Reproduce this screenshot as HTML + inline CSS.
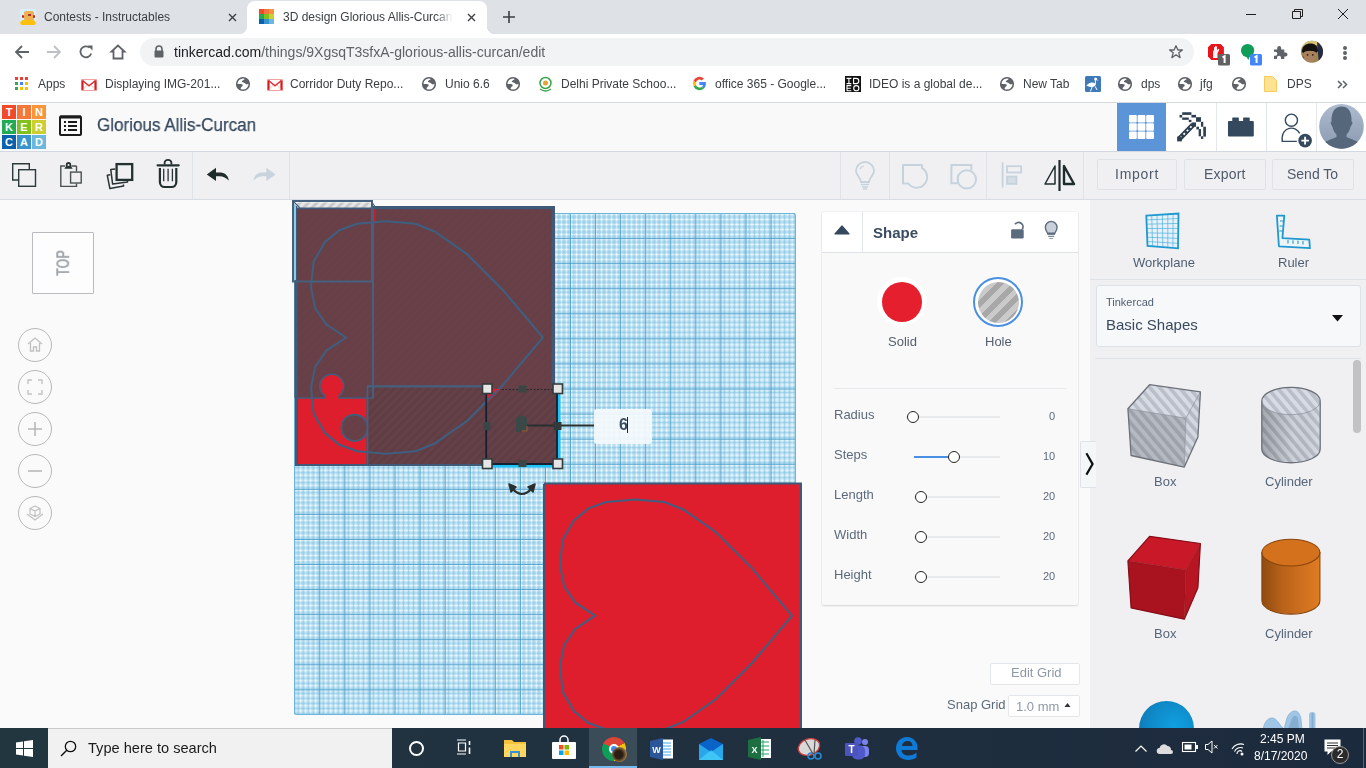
<!DOCTYPE html>
<html><head><meta charset="utf-8">
<style>
*{margin:0;padding:0;box-sizing:border-box}
html,body{width:1366px;height:768px;overflow:hidden;background:#fafafa;font-family:"Liberation Sans",sans-serif;position:relative}
.a{position:absolute}
.t{position:absolute;white-space:nowrap;line-height:1;will-change:transform}
svg{position:absolute;overflow:visible}
.bm{font-size:12px;color:#3c4043}
</style></head><body>
<!-- ===== CHROME TAB STRIP ===== -->
<div class="a" style="left:0;top:0;width:1366px;height:34px;background:#dee1e6"></div>
<!-- inactive tab -->
<div class="a" style="left:20px;top:9px;width:16px;height:16px;border-radius:2px;background:#d8f0fb;overflow:hidden">
  <div class="a" style="left:4px;top:2px;width:9.5px;height:9px;border-radius:2px 2px 1px 1px;background:#eeb050"></div>
  <div class="a" style="left:2px;top:6px;width:2px;height:3px;border-radius:1px;background:#b82a2a"></div>
  <div class="a" style="left:13px;top:6px;width:2px;height:3px;border-radius:1px;background:#b82a2a"></div>
  <div class="a" style="left:8px;top:5px;width:2.5px;height:2px;background:#a33"></div>
  <div class="a" style="left:0;top:11px;width:16px;height:5px;border-radius:4px 4px 1px 1px;background:#fcc10e"></div>
</div>
<div class="t" style="left:44px;top:10.5px;font-size:12px;color:#3c4043">Contests - Instructables</div>
<svg style="left:228px;top:13px" width="9" height="9" viewBox="0 0 9 9"><path d="M1 1L8 8M8 1L1 8" stroke="#3c4043" stroke-width="1.4"/></svg>
<!-- active tab -->
<div class="a" style="left:247px;top:1px;width:240px;height:34px;background:#fff;border-radius:8px 8px 0 0"></div>
<div class="a" style="left:239px;top:26px;width:8px;height:8px;background:radial-gradient(circle at 0 0,#dee1e6 8px,#fff 8.5px)"></div>
<div class="a" style="left:487px;top:26px;width:8px;height:8px;background:radial-gradient(circle at 100% 0,#dee1e6 8px,#fff 8.5px)"></div>
<!-- tinkercad favicon -->
<div class="a" style="left:259px;top:9px;width:15px;height:15px">
 <div class="a" style="left:0;top:0;width:4.5px;height:4.5px;background:#f04a2b"></div>
 <div class="a" style="left:5px;top:0;width:4.5px;height:4.5px;background:#f7763c"></div>
 <div class="a" style="left:10px;top:0;width:4.5px;height:4.5px;background:#f8953a"></div>
 <div class="a" style="left:0;top:5px;width:4.5px;height:4.5px;background:#22ab55"></div>
 <div class="a" style="left:5px;top:5px;width:4.5px;height:4.5px;background:#82c01e"></div>
 <div class="a" style="left:10px;top:5px;width:4.5px;height:4.5px;background:#cdcf30"></div>
 <div class="a" style="left:0;top:10px;width:4.5px;height:4.5px;background:#0a62ae"></div>
 <div class="a" style="left:5px;top:10px;width:4.5px;height:4.5px;background:#3a93cf"></div>
 <div class="a" style="left:10px;top:10px;width:4.5px;height:4.5px;background:#6bb8de"></div>
</div>
<div class="a" style="left:283px;top:8px;width:172px;height:18px;overflow:hidden">
 <div class="t" style="left:0;top:2.5px;font-size:12px;color:#3c4043">3D design Glorious Allis-Curcan | Tinkercad</div>
 <div class="a" style="left:152px;top:0;width:20px;height:18px;background:linear-gradient(90deg,rgba(255,255,255,0),#fff 90%)"></div>
</div>
<svg style="left:467px;top:13px" width="9" height="9" viewBox="0 0 9 9"><path d="M1 1L8 8M8 1L1 8" stroke="#3c4043" stroke-width="1.4"/></svg>
<svg style="left:503px;top:11px" width="12" height="12" viewBox="0 0 12 12"><path d="M6 0V12M0 6H12" stroke="#3c4043" stroke-width="1.6"/></svg>
<!-- window controls -->
<svg style="left:1246px;top:14px" width="10" height="1" viewBox="0 0 10 1"><path d="M0 .5H10" stroke="#1f1f1f" stroke-width="1"/></svg>
<svg style="left:1292px;top:9px" width="11" height="10" viewBox="0 0 11 10"><path d="M.5 2.5H8.5V9.5H.5Z M2.5 2.5V.5H10.5V7.5H8.5" fill="none" stroke="#1f1f1f" stroke-width="1"/></svg>
<svg style="left:1338px;top:9px" width="10" height="10" viewBox="0 0 10 10"><path d="M0 0L10 10M10 0L0 10" stroke="#1f1f1f" stroke-width="1"/></svg>

<!-- ===== ADDRESS ROW ===== -->
<div class="a" style="left:0;top:34px;width:1366px;height:68px;background:#fff"></div>
<svg style="left:15px;top:45px" width="14" height="14" viewBox="0 0 14 14"><path d="M14 7H1.5M7 1L1 7L7 13" fill="none" stroke="#5f6368" stroke-width="1.8"/></svg>
<svg style="left:47px;top:45px" width="14" height="14" viewBox="0 0 14 14"><path d="M0 7H12.5M7 1L13 7L7 13" fill="none" stroke="#bdc1c6" stroke-width="1.8"/></svg>
<svg style="left:79px;top:45px" width="14" height="14" viewBox="0 0 14 14"><path d="M12.2 8.5A5.5 5.5 0 1 1 10.5 2.6" fill="none" stroke="#5f6368" stroke-width="1.8"/><path d="M8.5 0.5H13.5V5.5Z" fill="#5f6368"/></svg>
<svg style="left:110px;top:44px" width="16" height="16" viewBox="0 0 16 16"><path d="M8 1.5L1.5 7.5H3.5V14.5H12.5V7.5H14.5Z" fill="none" stroke="#5f6368" stroke-width="1.8" stroke-linejoin="miter"/></svg>
<div class="a" style="left:140px;top:38px;width:1054px;height:28px;border-radius:14px;background:#f1f3f4"></div>
<svg style="left:154px;top:45px" width="10" height="13" viewBox="0 0 10 13"><path d="M2 6V4A3 3 0 0 1 8 4V6" fill="none" stroke="#5f6368" stroke-width="1.6"/><rect x="0.5" y="5.5" width="9" height="7" rx="1" fill="#5f6368"/></svg>
<div class="t" style="left:174px;top:44.5px;font-size:14px;color:#202124;letter-spacing:0">tinkercad.com<span style="color:#5f6368">/things/9XgsqT3sfxA-glorious-allis-curcan/edit</span></div>
<svg style="left:1169px;top:45px" width="14" height="14" viewBox="0 0 14 14"><path d="M7 .8L8.9 5H13.4L9.8 7.8L11.1 12.6L7 9.8L2.9 12.6L4.2 7.8L.6 5H5.1Z" fill="none" stroke="#5f6368" stroke-width="1.3" stroke-linejoin="round"/></svg>
<!-- extensions -->
<svg style="left:1200px;top:36px" width="130" height="32" viewBox="1200 36 130 32">
<path d="M1211.3 44H1220.6L1223.9 47.3V56.6L1220.6 59.9H1211.3L1208 56.6V47.3Z" fill="#e8141a"/>
<path d="M1213 58V51.5L1214 50V47.5C1214 46.8 1215 46.8 1215 47.5V46.3C1215 45.6 1216 45.6 1216 46.3V46.8C1216 46.1 1217 46.1 1217 46.8V50L1218.5 49C1219 48.7 1219.6 49.3 1219.2 49.8L1217.5 53.5V58Z" fill="#fff" opacity=".95"/>
<rect x="1218" y="54" width="12" height="11.5" rx="1.5" fill="#616161"/>
<path d="M1222.5 57.3L1224.6 56.1V63" fill="none" stroke="#fff" stroke-width="2"/>
<circle cx="1247.6" cy="50.5" r="6.6" fill="#0f9d58"/>
<path d="M1246 56L1248.3 60L1250 56Z" fill="#0f9d58"/>
<rect x="1250" y="54" width="12" height="11.5" rx="1.5" fill="#4285f4"/>
<path d="M1254.5 57.3L1256.6 56.1V63" fill="none" stroke="#fff" stroke-width="2"/>
<path d="M1274 49.5H1277.2V48A2 2 0 0 1 1281.2 48V49.5H1284.3V52.6H1285.5A2 2 0 0 1 1285.5 56.6H1284.3V59H1281V57.8A2 2 0 0 0 1277 57.8V59H1274V55.8H1275.3A2 2 0 0 0 1275.3 51.8H1274Z" fill="#5f6368"/>
<defs><clipPath id="avc2"><circle cx="1312" cy="51.8" r="11"/></clipPath></defs>
<g clip-path="url(#avc2)">
<rect x="1300" y="40" width="24" height="24" fill="#9a8450"/>
<path d="M1300 40H1324V48C1318 44 1308 44 1300 47Z" fill="#d6c27a"/>
<path d="M1317 42L1324 44V64H1319Z" fill="#262a44"/>
<path d="M1302 52C1302 46 1306 43.5 1310.5 43.5C1315 43.5 1318 46 1318 51L1316 53C1314 50 1306 50 1304 53Z" fill="#15110e"/>
<path d="M1304 52.5C1305 50.5 1314 50.5 1316 52.5C1317 57 1315 62 1310 62.5C1306 62.5 1303.5 58 1304 52.5Z" fill="#a8825e"/>
<circle cx="1307.5" cy="54.8" r=".9" fill="#2a1a10"/><circle cx="1312.8" cy="54.8" r=".9" fill="#2a1a10"/>
<path d="M1300 58L1304 56V64H1300Z" fill="#c02020" opacity=".6"/>
</g>
</svg>
<div class="a" style="left:1343px;top:46px;width:4px;height:4px;border-radius:50%;background:#5f6368"></div>
<div class="a" style="left:1343px;top:51px;width:4px;height:4px;border-radius:50%;background:#5f6368"></div>
<div class="a" style="left:1343px;top:56px;width:4px;height:4px;border-radius:50%;background:#5f6368"></div>

<!-- ===== BOOKMARKS ===== -->

<div class="a" style="left:15px;top:77px;width:3px;height:3px;background:#ea4335"></div><div class="a" style="left:20px;top:77px;width:3px;height:3px;background:#ea4335"></div><div class="a" style="left:25px;top:77px;width:3px;height:3px;background:#ea4335"></div><div class="a" style="left:15px;top:82px;width:3px;height:3px;background:#34a853"></div><div class="a" style="left:20px;top:82px;width:3px;height:3px;background:#4285f4"></div><div class="a" style="left:25px;top:82px;width:3px;height:3px;background:#fbbc04"></div><div class="a" style="left:15px;top:87px;width:3px;height:3px;background:#34a853"></div><div class="a" style="left:20px;top:87px;width:3px;height:3px;background:#fbbc04"></div><div class="a" style="left:25px;top:87px;width:3px;height:3px;background:#fbbc04"></div>
<div class="t bm" style="left:38px;top:78px">Apps</div>
<svg style="left:81px;top:78.5px" width="16" height="12" viewBox="0 0 16 12"><rect x=".6" y=".6" width="14.8" height="10.8" fill="#fff" stroke="#f08a8a" stroke-width=".8"/><path d="M1.6 11V1.4M14.4 11V1.4" stroke="#d41c1c" stroke-width="2"/><path d="M1.5 1.5L8 6.8L14.5 1.5" fill="none" stroke="#de3030" stroke-width="1.6"/><path d="M2 10.5L6.2 6M14 10.5L9.8 6" stroke="#f29a9a" stroke-width=".6"/></svg>
<div class="t bm" style="left:105px;top:78px">Displaying IMG-201...</div>
<svg style="left:235px;top:76px" width="16" height="16" viewBox="0 0 16 16"><circle cx="8" cy="8" r="6.3" fill="#fff" stroke="#5f6368" stroke-width="1.6"/><path d="M6.8 6C6.8 4.6 8.2 4 9.3 3.4L10.2 1.8A6.5 6.5 0 0 1 14.3 7.6L12.4 8.3C11.4 8.6 10.6 8.3 10.2 7.6C9.6 6.8 8.6 6.4 6.8 6Z" fill="#5f6368"/><path d="M1.6 8.1H5.9C7.4 8.1 8.1 9.1 7.6 10C6.6 10.5 6 11.2 5.6 12.5L5.4 14.2A6.5 6.5 0 0 1 1.6 8.1Z" fill="#5f6368"/></svg>
<svg style="left:267px;top:78.5px" width="16" height="12" viewBox="0 0 16 12"><rect x=".6" y=".6" width="14.8" height="10.8" fill="#fff" stroke="#f08a8a" stroke-width=".8"/><path d="M1.6 11V1.4M14.4 11V1.4" stroke="#d41c1c" stroke-width="2"/><path d="M1.5 1.5L8 6.8L14.5 1.5" fill="none" stroke="#de3030" stroke-width="1.6"/><path d="M2 10.5L6.2 6M14 10.5L9.8 6" stroke="#f29a9a" stroke-width=".6"/></svg>
<div class="t bm" style="left:290px;top:78px">Corridor Duty Repo...</div>
<svg style="left:421px;top:76px" width="16" height="16" viewBox="0 0 16 16"><circle cx="8" cy="8" r="6.3" fill="#fff" stroke="#5f6368" stroke-width="1.6"/><path d="M6.8 6C6.8 4.6 8.2 4 9.3 3.4L10.2 1.8A6.5 6.5 0 0 1 14.3 7.6L12.4 8.3C11.4 8.6 10.6 8.3 10.2 7.6C9.6 6.8 8.6 6.4 6.8 6Z" fill="#5f6368"/><path d="M1.6 8.1H5.9C7.4 8.1 8.1 9.1 7.6 10C6.6 10.5 6 11.2 5.6 12.5L5.4 14.2A6.5 6.5 0 0 1 1.6 8.1Z" fill="#5f6368"/></svg>
<div class="t bm" style="left:445px;top:78px">Unio 6.6</div>
<svg style="left:505px;top:76px" width="16" height="16" viewBox="0 0 16 16"><circle cx="8" cy="8" r="6.3" fill="#fff" stroke="#5f6368" stroke-width="1.6"/><path d="M6.8 6C6.8 4.6 8.2 4 9.3 3.4L10.2 1.8A6.5 6.5 0 0 1 14.3 7.6L12.4 8.3C11.4 8.6 10.6 8.3 10.2 7.6C9.6 6.8 8.6 6.4 6.8 6Z" fill="#5f6368"/><path d="M1.6 8.1H5.9C7.4 8.1 8.1 9.1 7.6 10C6.6 10.5 6 11.2 5.6 12.5L5.4 14.2A6.5 6.5 0 0 1 1.6 8.1Z" fill="#5f6368"/></svg>
<svg style="left:538px;top:76px" width="15" height="16" viewBox="0 0 15 16"><circle cx="7.5" cy="7" r="5.5" fill="none" stroke="#3aa34a" stroke-width="1.5"/><circle cx="7.5" cy="7" r="2.5" fill="#e8a030"/><path d="M2 13Q7.5 17 13 13" fill="none" stroke="#3aa34a" stroke-width="1.5"/></svg>
<div class="t bm" style="left:561px;top:78px">Delhi Private Schoo...</div>
<svg style="left:692px;top:76px" width="15" height="15" viewBox="0 0 16 16"><path d="M15 8.2H8V6.6H14.8" fill="#4285f4"/><path d="M14.5 6.6A7 7 0 0 1 12.8 13.2L10.6 11.4A4 4 0 0 0 11.9 9.5H8V6.6Z" fill="#4285f4"/><path d="M12.8 13.2A7 7 0 0 1 1.7 11.1L4.2 9.2A4 4 0 0 0 10.6 11.4Z" fill="#34a853"/><path d="M1.7 11.1A7 7 0 0 1 1.7 4.9L4.2 6.8A4 4 0 0 0 4.2 9.2Z" fill="#fbbc05"/><path d="M1.7 4.9A7 7 0 0 1 12.6 2.6L10.5 4.7A4 4 0 0 0 4.2 6.8Z" fill="#ea4335"/></svg>
<div class="t bm" style="left:715px;top:78px">office 365 - Google...</div>
<svg style="left:845px;top:76px" width="16" height="16" viewBox="0 0 16 16"><rect width="16" height="16" fill="#111"/><path d="M1.5 2.4H6.3M1.5 7.6H6.3M3.9 2.4V7.6M8.6 2.4H11.2A2.6 2.6 0 0 1 11.2 7.6H8.6Z M1.6 9.6H6.3M1.6 12.2H5.8M1.6 14.7H6.3M2 9.6V14.7" fill="none" stroke="#fff" stroke-width="1.1"/><circle cx="11.3" cy="12.2" r="2.6" fill="none" stroke="#fff" stroke-width="1.1"/></svg>
<div class="t bm" style="left:869px;top:78px">IDEO is a global de...</div>
<svg style="left:999px;top:76px" width="16" height="16" viewBox="0 0 16 16"><circle cx="8" cy="8" r="6.3" fill="#fff" stroke="#5f6368" stroke-width="1.6"/><path d="M6.8 6C6.8 4.6 8.2 4 9.3 3.4L10.2 1.8A6.5 6.5 0 0 1 14.3 7.6L12.4 8.3C11.4 8.6 10.6 8.3 10.2 7.6C9.6 6.8 8.6 6.4 6.8 6Z" fill="#5f6368"/><path d="M1.6 8.1H5.9C7.4 8.1 8.1 9.1 7.6 10C6.6 10.5 6 11.2 5.6 12.5L5.4 14.2A6.5 6.5 0 0 1 1.6 8.1Z" fill="#5f6368"/></svg>
<div class="t bm" style="left:1023px;top:78px">New Tab</div>
<svg style="left:1085px;top:76px" width="16" height="16" viewBox="0 0 16 16"><rect width="16" height="16" rx="1.5" fill="#3f79ba"/><path d="M1.2 9.4C2.5 9 3.5 7 6.5 6.6C8.5 6.4 10 7.2 10.6 8.3C10.5 10 9 11 6.8 11C4.5 11 3 10 1.2 9.4Z" fill="#fff"/><path d="M10.4 8.6V4.2M7.4 10.6L5.4 15.4M10.2 10.4L12 14" stroke="#fff" stroke-width="1"/><circle cx="10.6" cy="3.1" r="1.5" fill="#fff"/><path d="M11.5 3.3L12.8 4.6" stroke="#fff" stroke-width=".8"/></svg>
<svg style="left:1117px;top:76px" width="16" height="16" viewBox="0 0 16 16"><circle cx="8" cy="8" r="6.3" fill="#fff" stroke="#5f6368" stroke-width="1.6"/><path d="M6.8 6C6.8 4.6 8.2 4 9.3 3.4L10.2 1.8A6.5 6.5 0 0 1 14.3 7.6L12.4 8.3C11.4 8.6 10.6 8.3 10.2 7.6C9.6 6.8 8.6 6.4 6.8 6Z" fill="#5f6368"/><path d="M1.6 8.1H5.9C7.4 8.1 8.1 9.1 7.6 10C6.6 10.5 6 11.2 5.6 12.5L5.4 14.2A6.5 6.5 0 0 1 1.6 8.1Z" fill="#5f6368"/></svg>
<div class="t bm" style="left:1141px;top:78px">dps</div>
<svg style="left:1177px;top:76px" width="16" height="16" viewBox="0 0 16 16"><circle cx="8" cy="8" r="6.3" fill="#fff" stroke="#5f6368" stroke-width="1.6"/><path d="M6.8 6C6.8 4.6 8.2 4 9.3 3.4L10.2 1.8A6.5 6.5 0 0 1 14.3 7.6L12.4 8.3C11.4 8.6 10.6 8.3 10.2 7.6C9.6 6.8 8.6 6.4 6.8 6Z" fill="#5f6368"/><path d="M1.6 8.1H5.9C7.4 8.1 8.1 9.1 7.6 10C6.6 10.5 6 11.2 5.6 12.5L5.4 14.2A6.5 6.5 0 0 1 1.6 8.1Z" fill="#5f6368"/></svg>
<div class="t bm" style="left:1200px;top:78px">jfg</div>
<svg style="left:1231px;top:76px" width="16" height="16" viewBox="0 0 16 16"><circle cx="8" cy="8" r="6.3" fill="#fff" stroke="#5f6368" stroke-width="1.6"/><path d="M6.8 6C6.8 4.6 8.2 4 9.3 3.4L10.2 1.8A6.5 6.5 0 0 1 14.3 7.6L12.4 8.3C11.4 8.6 10.6 8.3 10.2 7.6C9.6 6.8 8.6 6.4 6.8 6Z" fill="#5f6368"/><path d="M1.6 8.1H5.9C7.4 8.1 8.1 9.1 7.6 10C6.6 10.5 6 11.2 5.6 12.5L5.4 14.2A6.5 6.5 0 0 1 1.6 8.1Z" fill="#5f6368"/></svg>
<svg style="left:1264px;top:76px" width="13" height="16" viewBox="0 0 13 16"><path d="M.5 .5H8.5L12.5 4.5V15.5H.5Z" fill="#fde293" stroke="#f9cb5a" stroke-width="1"/></svg>
<div class="t bm" style="left:1287px;top:78px">DPS</div>
<svg style="left:1337px;top:80px" width="11" height="9" viewBox="0 0 11 9"><path d="M1 1L4.5 4.5L1 8M6 1L9.5 4.5L6 8" fill="none" stroke="#5f6368" stroke-width="1.5"/></svg>

<!-- ===== TINKERCAD HEADER ===== -->

<div class="a" style="left:0;top:102px;width:1366px;height:50px;background:#f9f9f9;border-top:1px solid #d6d9e0;border-bottom:1px solid #d3d8e0"></div>
<!-- logo -->
<div class="a" style="left:2px;top:105px;width:44px;height:44px;font:bold 11px/14px 'Liberation Sans',sans-serif;color:#fff;text-align:center">
 <div class="a" style="left:0;top:0;width:14px;height:14px;background:#f04a2b">T</div>
 <div class="a" style="left:15px;top:0;width:14px;height:14px;background:#f7763c">I</div>
 <div class="a" style="left:30px;top:0;width:14px;height:14px;background:#f8953a">N</div>
 <div class="a" style="left:0;top:15px;width:14px;height:14px;background:#22ab55">K</div>
 <div class="a" style="left:15px;top:15px;width:14px;height:14px;background:#82c01e">E</div>
 <div class="a" style="left:30px;top:15px;width:14px;height:14px;background:#cdcf30">R</div>
 <div class="a" style="left:0;top:30px;width:14px;height:14px;background:#0a62ae">C</div>
 <div class="a" style="left:15px;top:30px;width:14px;height:14px;background:#3a93cf">A</div>
 <div class="a" style="left:30px;top:30px;width:14px;height:14px;background:#6bb8de">D</div>
</div>
<!-- list icon -->
<svg style="left:59px;top:115px" width="23" height="21" viewBox="0 0 23 21"><rect x="1" y="1.5" width="21" height="18.5" rx="1" fill="none" stroke="#1b1b1b" stroke-width="2"/><path d="M1 2H22" stroke="#1b1b1b" stroke-width="3"/><path d="M5 7H7M9 7H18M5 11H7M9 11H18M5 15H7M9 15H18" stroke="#1b1b1b" stroke-width="2.2"/></svg>
<div class="t" style="left:96.5px;top:116.2px;font-size:18px;color:#34465c;transform:scaleX(.947);transform-origin:0 0;-webkit-text-stroke:.25px #34465c">Glorious Allis-Curcan</div>
<!-- header right buttons -->
<div class="a" style="left:1117px;top:103px;width:49px;height:48px;background:#5b95d8"></div>
<svg style="left:1129px;top:115px" width="25" height="24" viewBox="0 0 25 24"><g fill="#fff"><rect x="0.0" y="0.0" width="7.8" height="7.5" rx="1"/><rect x="8.6" y="0.0" width="7.8" height="7.5" rx="1"/><rect x="17.2" y="0.0" width="7.8" height="7.5" rx="1"/><rect x="0.0" y="8.3" width="7.8" height="7.5" rx="1"/><rect x="8.6" y="8.3" width="7.8" height="7.5" rx="1"/><rect x="17.2" y="8.3" width="7.8" height="7.5" rx="1"/><rect x="0.0" y="16.6" width="7.8" height="7.5" rx="1"/><rect x="8.6" y="16.6" width="7.8" height="7.5" rx="1"/><rect x="17.2" y="16.6" width="7.8" height="7.5" rx="1"/></g></svg>
<div class="a" style="left:1166px;top:103px;width:150px;height:48px;background:#fff"></div>
<div class="a" style="left:1216px;top:103px;width:1px;height:48px;background:#e3e6ea"></div>
<div class="a" style="left:1266px;top:103px;width:1px;height:48px;background:#e3e6ea"></div>
<div class="a" style="left:1316px;top:103px;width:1px;height:48px;background:#e3e6ea"></div>
<div class="a" style="left:1317px;top:103px;width:49px;height:48px;background:#fff"></div>
<!-- pickaxe -->
<svg style="left:1170px;top:105px" width="90" height="45" viewBox="0 0 1366 683"><g fill="#2d3e50"><rect x="185" y="110" width="140" height="40"/><rect x="145" y="150" width="40" height="40"/><rect x="325" y="150" width="70" height="40"/><rect x="185" y="190" width="100" height="35"/><rect x="395" y="185" width="75" height="70"/><rect x="285" y="225" width="40" height="35"/><rect x="470" y="255" width="35" height="75"/><rect x="400" y="330" width="40" height="40"/><rect x="435" y="365" width="35" height="110"/><rect x="505" y="330" width="40" height="150"/><rect x="470" y="475" width="35" height="40"/><rect x="330" y="265" width="65" height="65"/></g>
<path d="M140 515L350 300" stroke="#2d3e50" stroke-width="78"/>
<path d="M155 500L345 305" stroke="#fff" stroke-width="26" stroke-dasharray="30 42"/>
<rect x="108" y="480" width="72" height="72" fill="#2d3e50"/>
</svg>
<!-- brick -->
<svg style="left:1170px;top:105px" width="90" height="45" viewBox="0 0 1366 683"><g fill="#34495e"><rect x="945" y="188" width="100" height="70" rx="8"/><rect x="1110" y="188" width="100" height="70" rx="8"/><rect x="880" y="243" width="392" height="235" rx="14"/></g></svg>
<!-- person add -->
<svg style="left:1270px;top:103px" width="96" height="48" viewBox="1270 103 96 48">
<circle cx="1291.4" cy="120.2" r="6.1" fill="none" stroke="#34495e" stroke-width="1.4"/>
<path d="M1299.7 133.4A9.2 9.2 0 0 0 1282.2 137.3V141.4H1296.8" fill="none" stroke="#34495e" stroke-width="1.4"/>
<circle cx="1305.1" cy="140.6" r="6.8" fill="#34495e"/>
<path d="M1305.1 136.8V144.4M1301.3 140.6H1308.9" stroke="#fff" stroke-width="1.9"/>
<defs><clipPath id="avc"><circle cx="1341.5" cy="126.4" r="22.3"/></clipPath><linearGradient id="avg" x1="0" y1="0" x2="0" y2="1"><stop offset="0" stop-color="#aebcd0"/><stop offset="1" stop-color="#8898ae"/></linearGradient></defs>
<g clip-path="url(#avc)">
<rect x="1318" y="103" width="48" height="48" fill="url(#avg)"/>
<path d="M1331.5 122C1331 112 1335 106.5 1341.5 106.5C1348 106.5 1352 111 1351.5 121.5L1352.6 122.5C1352 125 1351 126 1350.5 127C1349.5 131 1348 133 1346.5 134.5V137C1352 139.5 1358 141 1361 145L1362 152H1321L1322 145C1325 141 1331 139.5 1336.5 137V134.5C1335 133 1333.5 131 1332.5 127C1332 126 1331 125 1330.5 122.5Z" fill="#56667b"/>
</g>
</svg>

<!-- ===== TOOLBAR ===== -->
<div class="a" style="left:0;top:152px;width:1366px;height:48px;background:#f0f0f3;border-bottom:1px solid #d8dce3"></div>
<div class="a" style="left:192px;top:152px;width:1px;height:47px;background:#e0e3e8"></div>
<div class="a" style="left:289px;top:152px;width:1px;height:47px;background:#e0e3e8"></div>
<div class="a" style="left:840px;top:152px;width:1px;height:47px;background:#e0e3e8"></div>
<div class="a" style="left:889px;top:152px;width:1px;height:47px;background:#e0e3e8"></div>
<div class="a" style="left:986px;top:152px;width:1px;height:47px;background:#e0e3e8"></div>
<div class="a" style="left:1083px;top:152px;width:1px;height:47px;background:#e0e3e8"></div>
<!-- copy -->
<svg style="left:12px;top:163px" width="25" height="24" viewBox="0 0 25 24"><path d="M6.5 17H.7V.7H17.3V6.5" fill="none" stroke="#2b3a3a" stroke-width="1.4"/><rect x="6.7" y="6.7" width="16.8" height="16.6" fill="none" stroke="#2b3a3a" stroke-width="1.4"/></svg>
<!-- paste -->
<svg style="left:55px;top:155px" width="130" height="40" viewBox="55 155 130 40">
<path d="M65 166H60.8V186.4H76.5V183.5M76.5 166H71.5M76.5 166V171.5" fill="none" stroke="#4a5050" stroke-width="1.4"/>
<path d="M64.3 168.7H72.7L71.2 166.5V164.7A2.7 2.7 0 0 0 65.8 164.7V166.5Z" fill="#2b3434"/>
<circle cx="68.5" cy="165" r="1" fill="#f0f0f3"/>
<rect x="70.6" y="172.1" width="10.6" height="10.9" fill="none" stroke="#4a5050" stroke-width="1.4"/>
<!-- duplicate -->
<rect x="116.6" y="164.1" width="15.6" height="15.8" fill="none" stroke="#233030" stroke-width="2.3"/>
<path d="M115.3 169L110.8 169.6L112.6 184.1L127.6 182.1L127.4 181" fill="none" stroke="#2b3434" stroke-width="1.5" stroke-linejoin="round"/>
<path d="M110.3 174.7L107.3 175.3L109.9 188.6L123.6 186.1L123.3 184.5" fill="none" stroke="#2b3434" stroke-width="1.5" stroke-linejoin="round"/>
<!-- trash -->
<path d="M157.6 165.3H178.7" stroke="#233030" stroke-width="2.2" stroke-linecap="round"/>
<path d="M164.6 164.5V162.8A3.4 3 0 0 1 171.4 162.8V164.5" fill="none" stroke="#233030" stroke-width="1.8"/>
<path d="M159.9 168V182.3A4.7 4.7 0 0 0 164.6 187H171.6A4.7 4.7 0 0 0 176.3 182.3V168" fill="none" stroke="#233030" stroke-width="2.2"/>
<path d="M163.7 168.8V181.2M168.1 168.8V181.2M172.4 168.8V181.2" stroke="#2b3434" stroke-width="1.3"/>
</svg>
<!-- undo -->
<svg style="left:195px;top:155px" width="90" height="40" viewBox="195 155 90 40">
<path d="M206.8 174.4L216 167.7V172.6H219.5C224.5 172.6 228.3 175.2 228.8 180.8C226.3 177.8 223.2 176.2 219.5 176.2H216V180.9Z" fill="#1f2c2c"/>
<path d="M275.5 174.4L266.3 167.7V172.6H262.8C257.8 172.6 254 175.2 253.5 180.8C256 177.8 259.1 176.2 262.8 176.2H266.3V180.9Z" fill="#c8d3dd"/>
</svg>
<!-- bulb -->
<svg style="left:855px;top:162px" width="20" height="28" viewBox="0 0 20 28"><path d="M6 20C6 16 1 13 1 9A9 9 0 0 1 19 9C19 13 14 16 14 20Z" fill="none" stroke="#c6d3dd" stroke-width="1.8"/><path d="M6 22.5H14M7 25H13M8 27H12" stroke="#c6d3dd" stroke-width="1.6"/><path d="M5 7A5 5 0 0 1 9 4" fill="none" stroke="#c6d3dd" stroke-width="1.2"/></svg>
<!-- group -->
<svg style="left:845px;top:155px" width="240" height="40" viewBox="845 155 240 40">
<path d="M903 165H922V168.1A10.5 10.5 0 1 1 908.3 183.5H903Z" fill="none" stroke="#c6d3dd" stroke-width="2" stroke-linejoin="round"/>
<path d="M958 174.5V183.2H951.4V165H971.3V170.6" fill="none" stroke="#c6d3dd" stroke-width="2"/>
<circle cx="966.8" cy="179.4" r="9.2" fill="none" stroke="#c6d3dd" stroke-width="2"/>
<path d="M1002.6 162.3V187.5" stroke="#c6d3dd" stroke-width="1.8"/>
<rect x="1007" y="166.2" width="14.2" height="6.3" fill="none" stroke="#c6d3dd" stroke-width="1.8"/>
<rect x="1007" y="176.6" width="9.4" height="7.3" fill="#d5dee6" stroke="#c6d3dd" stroke-width="1.8"/>
</svg>
<!-- mirror -->
<svg style="left:1044px;top:160px" width="31" height="31" viewBox="0 0 31 31"><path d="M15.5 0V31" stroke="#1f2c2c" stroke-width="2.2"/><path d="M11 6V24H1Z" fill="none" stroke="#1f2c2c" stroke-width="1.5" stroke-linejoin="round"/><path d="M20 6V24H30Z" fill="none" stroke="#1f2c2c" stroke-width="2.4" stroke-linejoin="round"/></svg>
<!-- import/export/send -->
<div class="a" style="left:1097px;top:159px;width:80px;height:31px;border:1px solid #dfe2e7;border-radius:2px;background:#f0f0f3"></div>
<div class="a" style="left:1184px;top:159px;width:82px;height:31px;border:1px solid #dfe2e7;border-radius:2px;background:#f0f0f3"></div>
<div class="a" style="left:1272px;top:159px;width:82px;height:31px;border:1px solid #dfe2e7;border-radius:2px;background:#f0f0f3"></div>
<div class="t" style="left:1115px;top:167px;font-size:14px;letter-spacing:.75px;color:#4f5b6b">Import</div>
<div class="t" style="left:1204px;top:167px;font-size:14px;letter-spacing:.2px;color:#4f5b6b">Export</div>
<div class="t" style="left:1287px;top:167px;font-size:14px;color:#4f5b6b">Send To</div>



<!-- ===== CANVAS ===== -->
<div class="a" style="left:0;top:200px;width:1090px;height:528px;background:#fafafa"></div>
<!-- view cube -->
<div class="a" style="left:32px;top:232px;width:62px;height:62px;border:1.5px solid #b9bbbf;border-radius:1px;background:#fdfdfd"></div>
<div class="t" style="left:63.5px;top:262.7px;font-size:17.5px;font-weight:bold;color:#a2a6ac;transform:translate(-50%,-50%) rotate(-90deg) scaleX(.72)">TOP</div>
<!-- nav buttons -->
<div class="a" style="left:18px;top:328px;width:34px;height:34px;border:1px solid #b8b8b8;border-radius:50%"></div>
<div class="a" style="left:18px;top:370px;width:34px;height:34px;border:1px solid #b8b8b8;border-radius:50%"></div>
<div class="a" style="left:18px;top:412px;width:34px;height:34px;border:1px solid #b8b8b8;border-radius:50%"></div>
<div class="a" style="left:18px;top:454px;width:34px;height:34px;border:1px solid #b8b8b8;border-radius:50%"></div>
<div class="a" style="left:18px;top:496px;width:34px;height:34px;border:1px solid #b8b8b8;border-radius:50%"></div>
<svg style="left:25px;top:335px" width="20" height="20" viewBox="0 0 20 20"><path d="M3 9L10 3L17 9M5.5 8V16H8.5V12H11.5V16H14.5V8" fill="none" stroke="#c0c0c0" stroke-width="1.3"/></svg>
<svg style="left:25px;top:377px" width="20" height="20" viewBox="0 0 20 20"><path d="M3 7V3H7M13 3H17V7M17 13V17H13M7 17H3V13" fill="none" stroke="#c4c4c4" stroke-width="1.4"/></svg>
<svg style="left:25px;top:419px" width="20" height="20" viewBox="0 0 20 20"><path d="M10 3V17M3 10H17" stroke="#b8b8b8" stroke-width="1.6"/></svg>
<svg style="left:25px;top:461px" width="20" height="20" viewBox="0 0 20 20"><path d="M3 10H17" stroke="#b8b8b8" stroke-width="1.6"/></svg>
<svg style="left:25px;top:503px" width="20" height="20" viewBox="0 0 20 20"><path d="M10 3L15 5.5V11L10 13.5L5 11V5.5Z M5 5.5L10 8L15 5.5M10 8V13.5M2 11L10 17L18 11" fill="none" stroke="#c0c0c0" stroke-width="1.2"/></svg>

<!-- workplane grid -->
<svg style="left:294px;top:213px" width="502" height="502" viewBox="0 0 502 502">
<defs><clipPath id="gclip"><rect x="0" y="0" width="502" height="502" rx="2.5"/></clipPath></defs>
<g clip-path="url(#gclip)">
<rect x="0" y="0" width="502" height="502" fill="#b6def1"/>
<path d="M1.70 0V502M0 1.50H502M6.71 0V502M0 6.51H502M11.73 0V502M0 11.53H502M16.74 0V502M0 16.54H502M21.76 0V502M0 21.56H502M26.77 0V502M0 26.57H502M31.78 0V502M0 31.58H502M36.80 0V502M0 36.60H502M41.81 0V502M0 41.61H502M46.83 0V502M0 46.63H502M51.84 0V502M0 51.64H502M56.85 0V502M0 56.65H502M61.87 0V502M0 61.67H502M66.88 0V502M0 66.68H502M71.90 0V502M0 71.70H502M76.91 0V502M0 76.71H502M81.92 0V502M0 81.72H502M86.94 0V502M0 86.74H502M91.95 0V502M0 91.75H502M96.97 0V502M0 96.77H502M101.98 0V502M0 101.78H502M106.99 0V502M0 106.79H502M112.01 0V502M0 111.81H502M117.02 0V502M0 116.82H502M122.04 0V502M0 121.84H502M127.05 0V502M0 126.85H502M132.06 0V502M0 131.86H502M137.08 0V502M0 136.88H502M142.09 0V502M0 141.89H502M147.11 0V502M0 146.91H502M152.12 0V502M0 151.92H502M157.13 0V502M0 156.93H502M162.15 0V502M0 161.95H502M167.16 0V502M0 166.96H502M172.18 0V502M0 171.98H502M177.19 0V502M0 176.99H502M182.20 0V502M0 182.00H502M187.22 0V502M0 187.02H502M192.23 0V502M0 192.03H502M197.25 0V502M0 197.05H502M202.26 0V502M0 202.06H502M207.27 0V502M0 207.07H502M212.29 0V502M0 212.09H502M217.30 0V502M0 217.10H502M222.32 0V502M0 222.12H502M227.33 0V502M0 227.13H502M232.34 0V502M0 232.14H502M237.36 0V502M0 237.16H502M242.37 0V502M0 242.17H502M247.39 0V502M0 247.19H502M252.40 0V502M0 252.20H502M257.41 0V502M0 257.21H502M262.43 0V502M0 262.23H502M267.44 0V502M0 267.24H502M272.46 0V502M0 272.26H502M277.47 0V502M0 277.27H502M282.48 0V502M0 282.28H502M287.50 0V502M0 287.30H502M292.51 0V502M0 292.31H502M297.53 0V502M0 297.33H502M302.54 0V502M0 302.34H502M307.55 0V502M0 307.35H502M312.57 0V502M0 312.37H502M317.58 0V502M0 317.38H502M322.60 0V502M0 322.40H502M327.61 0V502M0 327.41H502M332.62 0V502M0 332.42H502M337.64 0V502M0 337.44H502M342.65 0V502M0 342.45H502M347.67 0V502M0 347.47H502M352.68 0V502M0 352.48H502M357.69 0V502M0 357.49H502M362.71 0V502M0 362.51H502M367.72 0V502M0 367.52H502M372.74 0V502M0 372.54H502M377.75 0V502M0 377.55H502M382.76 0V502M0 382.56H502M387.78 0V502M0 387.58H502M392.79 0V502M0 392.59H502M397.81 0V502M0 397.61H502M402.82 0V502M0 402.62H502M407.83 0V502M0 407.63H502M412.85 0V502M0 412.65H502M417.86 0V502M0 417.66H502M422.88 0V502M0 422.68H502M427.89 0V502M0 427.69H502M432.90 0V502M0 432.70H502M437.92 0V502M0 437.72H502M442.93 0V502M0 442.73H502M447.95 0V502M0 447.75H502M452.96 0V502M0 452.76H502M457.97 0V502M0 457.77H502M462.99 0V502M0 462.79H502M468.00 0V502M0 467.80H502M473.02 0V502M0 472.82H502M478.03 0V502M0 477.83H502M483.04 0V502M0 482.84H502M488.06 0V502M0 487.86H502M493.07 0V502M0 492.87H502M498.09 0V502M0 497.89H502" stroke="#fff" stroke-opacity=".62" stroke-width="1"/>
<path d="M4.20 0V502M0 4.00H502M9.21 0V502M0 9.01H502M14.23 0V502M0 14.03H502M19.24 0V502M0 19.04H502M24.26 0V502M0 24.06H502M29.27 0V502M0 29.07H502M34.28 0V502M0 34.08H502M39.30 0V502M0 39.10H502M44.31 0V502M0 44.11H502M49.33 0V502M0 49.13H502M54.34 0V502M0 54.14H502M59.35 0V502M0 59.15H502M64.37 0V502M0 64.17H502M69.38 0V502M0 69.18H502M74.40 0V502M0 74.20H502M79.41 0V502M0 79.21H502M84.42 0V502M0 84.22H502M89.44 0V502M0 89.24H502M94.45 0V502M0 94.25H502M99.47 0V502M0 99.27H502M104.48 0V502M0 104.28H502M109.49 0V502M0 109.29H502M114.51 0V502M0 114.31H502M119.52 0V502M0 119.32H502M124.54 0V502M0 124.34H502M129.55 0V502M0 129.35H502M134.56 0V502M0 134.36H502M139.58 0V502M0 139.38H502M144.59 0V502M0 144.39H502M149.61 0V502M0 149.41H502M154.62 0V502M0 154.42H502M159.63 0V502M0 159.43H502M164.65 0V502M0 164.45H502M169.66 0V502M0 169.46H502M174.68 0V502M0 174.48H502M179.69 0V502M0 179.49H502M184.70 0V502M0 184.50H502M189.72 0V502M0 189.52H502M194.73 0V502M0 194.53H502M199.75 0V502M0 199.55H502M204.76 0V502M0 204.56H502M209.77 0V502M0 209.57H502M214.79 0V502M0 214.59H502M219.80 0V502M0 219.60H502M224.82 0V502M0 224.62H502M229.83 0V502M0 229.63H502M234.84 0V502M0 234.64H502M239.86 0V502M0 239.66H502M244.87 0V502M0 244.67H502M249.89 0V502M0 249.69H502M254.90 0V502M0 254.70H502M259.91 0V502M0 259.71H502M264.93 0V502M0 264.73H502M269.94 0V502M0 269.74H502M274.96 0V502M0 274.76H502M279.97 0V502M0 279.77H502M284.98 0V502M0 284.78H502M290.00 0V502M0 289.80H502M295.01 0V502M0 294.81H502M300.03 0V502M0 299.83H502M305.04 0V502M0 304.84H502M310.05 0V502M0 309.85H502M315.07 0V502M0 314.87H502M320.08 0V502M0 319.88H502M325.10 0V502M0 324.90H502M330.11 0V502M0 329.91H502M335.12 0V502M0 334.92H502M340.14 0V502M0 339.94H502M345.15 0V502M0 344.95H502M350.17 0V502M0 349.97H502M355.18 0V502M0 354.98H502M360.19 0V502M0 359.99H502M365.21 0V502M0 365.01H502M370.22 0V502M0 370.02H502M375.24 0V502M0 375.04H502M380.25 0V502M0 380.05H502M385.26 0V502M0 385.06H502M390.28 0V502M0 390.08H502M395.29 0V502M0 395.09H502M400.31 0V502M0 400.11H502M405.32 0V502M0 405.12H502M410.33 0V502M0 410.13H502M415.35 0V502M0 415.15H502M420.36 0V502M0 420.16H502M425.38 0V502M0 425.18H502M430.39 0V502M0 430.19H502M435.40 0V502M0 435.20H502M440.42 0V502M0 440.22H502M445.43 0V502M0 445.23H502M450.45 0V502M0 450.25H502M455.46 0V502M0 455.26H502M460.47 0V502M0 460.27H502M465.49 0V502M0 465.29H502M470.50 0V502M0 470.30H502M475.52 0V502M0 475.32H502M480.53 0V502M0 480.33H502M485.54 0V502M0 485.34H502M490.56 0V502M0 490.36H502M495.57 0V502M0 495.37H502M500.59 0V502M0 500.39H502" stroke="#7cc2e2" stroke-opacity=".45" stroke-width="1"/>
<path d="M0.75 0V502M0 0.55H502M25.82 0V502M0 25.62H502M50.89 0V502M0 50.69H502M75.96 0V502M0 75.76H502M101.03 0V502M0 100.83H502M126.10 0V502M0 125.90H502M151.17 0V502M0 150.97H502M176.24 0V502M0 176.04H502M201.31 0V502M0 201.11H502M226.38 0V502M0 226.18H502M251.45 0V502M0 251.25H502M276.52 0V502M0 276.32H502M301.59 0V502M0 301.39H502M326.66 0V502M0 326.46H502M351.73 0V502M0 351.53H502M376.80 0V502M0 376.60H502M401.87 0V502M0 401.67H502M426.94 0V502M0 426.74H502M452.01 0V502M0 451.81H502M477.08 0V502M0 476.88H502" stroke="#3f96c6" stroke-opacity=".8" stroke-width="1"/>
</g>
<rect x=".5" y=".5" width="501" height="501" rx="2.5" fill="none" stroke="#6db6da" stroke-width="1"/>
</svg>

<!-- shapes svg -->
<svg style="left:0;top:0" width="1366" height="768" viewBox="0 0 1366 768">
<defs>
<pattern id="hatch" width="6" height="6" patternUnits="userSpaceOnUse" patternTransform="rotate(45)"><rect width="6" height="6" fill="#694047"/><rect width="3" height="6" fill="#674047"/></pattern>
<pattern id="hatchg" width="6" height="6" patternUnits="userSpaceOnUse" patternTransform="rotate(45)"><rect width="6" height="6" fill="#e6e6e6"/><rect width="3" height="6" fill="#c9c9c9"/></pattern>
<pattern id="hatch2" width="6" height="6" patternUnits="userSpaceOnUse" patternTransform="rotate(45)"><rect width="6" height="6" fill="#654047"/><rect width="3" height="6" fill="#5f3d44"/></pattern>
</defs>
<!-- big maroon box -->
<rect x="296" y="207" width="258" height="258" fill="url(#hatch)"/>
<!-- red lower-left region -->
<rect x="297.5" y="398" width="69" height="66" fill="#de1d2d"/>
<circle cx="331.8" cy="386.2" r="12" fill="#de1d2d" stroke="#405e7e" stroke-width="1.6"/>
<rect x="325" y="395" width="13.5" height="6" fill="#de1d2d"/>
<path d="M297 398H325M338.5 398H367" stroke="#405e7e" stroke-width="1.6"/>
<circle cx="354.6" cy="427.8" r="13.2" fill="url(#hatch)" stroke="#405e7e" stroke-width="1.8"/>
<!-- selection-ish lower middle region -->
<rect x="367" y="387" width="120" height="78" fill="url(#hatch2)"/>
<!-- box edges -->
<path d="M296 207.6H553.3V465" fill="none" stroke="#3e5a78" stroke-width="3.4"/>
<path d="M296 207V465H554" fill="none" stroke="#3e5a78" stroke-width="2.2"/>
<path d="M296 282V398" stroke="#3e5a78" stroke-width="3.2"/>
<!-- small hole box top-left -->
<rect x="293" y="201" width="79" height="80.5" fill="none" stroke="#45617f" stroke-width="2"/>
<rect x="297" y="202.5" width="74" height="5" fill="url(#hatchg)"/>
<path d="M293 201L300 208M371 201L376 208" stroke="#45617f" stroke-width="1.2"/>
<path d="M295 204V280" stroke="#8fc9e2" stroke-width="2"/>
<rect x="374" y="209" width="2" height="14" fill="#c0202e"/>
<!-- vertical line x=373 -->
<path d="M373 207V398" stroke="#45617f" stroke-width="2"/>
<path d="M367.5 387V465" stroke="#45617f" stroke-width="1.8"/>
<path d="M367 386.4H487" stroke="#45617f" stroke-width="2.4"/>
<rect x="367.5" y="386.5" width="6" height="11.5" fill="none" stroke="#45617f" stroke-width="1.2"/>
<!-- selected hole box -->
<rect x="487" y="389" width="71" height="75" fill="url(#hatch2)"/>
<path d="M485 390H500L485 405Z" fill="#de1d2d"/>
<!-- heart 1 -->
<path d="M346,337.5 L326.5,324.5 L315.2,308.4 L311.0,287.4 L313.6,261.6 L324.9,242.2 L339.4,230.2 L357.2,223.8 L386.3,221.2 L415.4,223.8 L434.7,231.5 L467.0,254.1 L502.6,289.7 L543.0,337.5 L502.6,385.3 L467.0,420.9 L434.7,443.5 L415.4,451.2 L386.3,453.8 L357.2,451.2 L339.4,444.8 L324.9,432.8 L313.6,413.4 L311.0,387.6 L315.2,366.6 L326.5,350.5 Z" fill="none" stroke="#3f5f80" stroke-width="2"/>
<path d="M559 393V466H489" fill="none" stroke="#1fc3f5" stroke-width="3"/>
<path d="M486.2 389V464H557V389" fill="none" stroke="#142033" stroke-width="1.8"/>
<path d="M488 389.5H557" stroke="#2a2630" stroke-width="1.2" stroke-dasharray="2 1.5"/>
<path d="M492 389.5H500" stroke="#de1d2d" stroke-width="1.2"/>
<!-- dimension line -->
<path d="M525 425.5H594" stroke="#2a2f2f" stroke-width="2"/>
<path d="M516 420A5 4 0 0 1 527 420V432H516Z" fill="#3a4848"/><path d="M522 431H527V426" fill="none" stroke="#b0552a" stroke-width="1"/>
<!-- mid handles -->
<rect x="518.5" y="385.5" width="8" height="7" fill="#3a4646"/>
<rect x="518.5" y="460" width="8" height="7" fill="#3a4646"/>
<rect x="483.5" y="422" width="7" height="8" fill="#3a4646"/>
<rect x="553.5" y="422" width="8" height="8" fill="#2f3a3a"/>
<!-- corner handles -->
<rect x="482.5" y="384" width="9.5" height="9.5" fill="#e6e6e6" stroke="#343c3c" stroke-width="1.6"/>
<rect x="553" y="384" width="9.5" height="9.5" fill="#e6e6e6" stroke="#343c3c" stroke-width="1.6"/>
<rect x="482.5" y="459" width="9.5" height="9.5" fill="#e6e6e6" stroke="#343c3c" stroke-width="1.6"/>
<rect x="553" y="459" width="9.5" height="9.5" fill="#e6e6e6" stroke="#343c3c" stroke-width="1.6"/>
<!-- rotate arrow -->
<path d="M512 488Q522 500 532 488" fill="none" stroke="#2a2f2f" stroke-width="2.2"/>
<path d="M509 484L516 487L511 492Z M535 484L528 487L533 492Z" fill="#2a2f2f" stroke="#2a2f2f" stroke-width="1.5" stroke-linejoin="round"/>
<!-- red box lower -->
<rect x="544" y="483.5" width="257" height="250" fill="#de1d2d"/>
<path d="M544 484V730M544 483.5H801V730" fill="none" stroke="#3e5a78" stroke-width="2"/>
<path d="M595,615.7 L575.5,602.7 L564.2,586.6 L560.0,565.6 L562.6,539.8 L573.9,520.4 L588.4,508.4 L606.2,502.0 L635.3,499.4 L664.4,502.0 L683.7,509.7 L716.0,532.3 L751.6,567.9 L792.0,615.7 L751.6,663.5 L716.0,699.1 L683.7,721.7 L664.4,729.4 L635.3,732.0 L606.2,729.4 L588.4,723.0 L573.9,711.0 L562.6,691.6 L560.0,665.8 L564.2,644.8 L575.5,628.7 Z" fill="none" stroke="#405f80" stroke-width="2"/>
</svg>
<!-- dimension input -->
<div class="a" style="left:594px;top:409px;width:58px;height:35px;border-radius:3px;background:rgba(245,250,252,.92)"></div>
<div class="t" style="left:618.5px;top:417px;font-size:16px;font-weight:bold;color:#3b4c63">6</div>
<div class="a" style="left:627px;top:417px;width:1px;height:16px;background:#222"></div>


<!-- ===== SHAPE PANEL ===== -->
<div class="a" style="left:822px;top:212px;width:256px;height:393px;background:#f9f9f9;border-radius:2px;box-shadow:0 1px 2px rgba(0,0,0,.12),0 0 0 1px rgba(0,0,0,.03)"></div>
<div class="a" style="left:822px;top:212px;width:256px;height:41px;background:#fff;border-bottom:1px solid #dde2ea;border-radius:2px 2px 0 0"></div>
<div class="a" style="left:862px;top:212px;width:1px;height:40px;background:#e2e6ec"></div>
<svg style="left:834px;top:225px" width="16" height="10" viewBox="0 0 16 10"><path d="M8 1L15 9H1Z" fill="#34495e" stroke="#34495e" stroke-width="1.2" stroke-linejoin="round"/></svg>
<div class="t" style="left:873px;top:224.6px;font-size:15px;font-weight:bold;color:#3a4c62">Shape</div>
<svg style="left:995px;top:212px" width="80" height="40" viewBox="995 212 80 40">
<path d="M1015 224.3A4.3 4.3 0 1 1 1022.2 229.3" fill="none" stroke="#5b6b7e" stroke-width="1.7"/>
<rect x="1011.1" y="229.3" width="12.6" height="9.3" rx="1.3" fill="#5b6b7e"/>
<path d="M1047.7 233.3C1046.5 231.5 1045.3 229.8 1045.3 227.3A5.9 5.9 0 0 1 1057.1 227.3C1057.1 229.8 1055.9 231.5 1054.7 233.3Z" fill="#c9d0da" stroke="#5b6b7e" stroke-width="1.4" stroke-linejoin="round"/>
<path d="M1047.3 234.2H1055.1" stroke="#5b6b7e" stroke-width="1.3"/>
<path d="M1048.2 236.3H1054.2" stroke="#5b6b7e" stroke-width="1"/>
<path d="M1049.3 238.5H1053.1" stroke="#8a97a5" stroke-width=".9"/>
</svg>
<!-- solid/hole -->
<div class="a" style="left:877px;top:277px;width:49px;height:49px;border-radius:50%;background:#fff"></div>
<div class="a" style="left:881.5px;top:281.5px;width:40px;height:40px;border-radius:50%;background:#e51f2d"></div>
<div class="t" style="left:888px;top:335px;font-size:13px;color:#56606d">Solid</div>
<div class="a" style="left:973px;top:277px;width:50px;height:50px;border-radius:50%;background:#fff;border:2px solid #4a90e2"></div>
<div class="a" style="left:977.5px;top:281.5px;width:41px;height:41px;border-radius:50%;background:repeating-linear-gradient(-45deg,#cacaca 0 5.5px,#a8a8a8 5.5px 11px)"></div>
<div class="t" style="left:985px;top:335px;font-size:13px;color:#56606d">Hole</div>
<div class="a" style="left:834px;top:388px;width:232px;height:1px;background:#e6e8ec"></div>
<!-- sliders -->
<div class="t" style="left:834px;top:407.6px;font-size:13px;color:#5b6a7c">Radius</div>
<div class="a" style="left:906px;top:416.1px;width:94px;height:1.5px;background:#e9eaec"></div>
<div class="a" style="left:907px;top:410.6px;width:12px;height:12px;border-radius:50%;background:#fff;border:1.5px solid #222"></div>
<div class="t" style="left:1049px;top:410.6px;font-size:11px;color:#5b6a7c">0</div>
<div class="t" style="left:834px;top:447.6px;font-size:13px;color:#5b6a7c">Steps</div>
<div class="a" style="left:914px;top:456.1px;width:86px;height:1.5px;background:#e9eaec"></div>
<div class="a" style="left:914px;top:455.6px;width:40px;height:2px;background:#4a90e2"></div>
<div class="a" style="left:948px;top:450.6px;width:12px;height:12px;border-radius:50%;background:#fff;border:1.5px solid #222"></div>
<div class="t" style="left:1043px;top:450.6px;font-size:11px;color:#5b6a7c">10</div>
<div class="t" style="left:834px;top:487.6px;font-size:13px;color:#5b6a7c">Length</div>
<div class="a" style="left:914px;top:496.1px;width:86px;height:1.5px;background:#e9eaec"></div>
<div class="a" style="left:915px;top:490.6px;width:12px;height:12px;border-radius:50%;background:#fff;border:1.5px solid #222"></div>
<div class="t" style="left:1043px;top:490.6px;font-size:11px;color:#5b6a7c">20</div>
<div class="t" style="left:834px;top:527.6px;font-size:13px;color:#5b6a7c">Width</div>
<div class="a" style="left:914px;top:536.1px;width:86px;height:1.5px;background:#e9eaec"></div>
<div class="a" style="left:915px;top:530.6px;width:12px;height:12px;border-radius:50%;background:#fff;border:1.5px solid #222"></div>
<div class="t" style="left:1043px;top:530.6px;font-size:11px;color:#5b6a7c">20</div>
<div class="t" style="left:834px;top:567.6px;font-size:13px;color:#5b6a7c">Height</div>
<div class="a" style="left:914px;top:576.1px;width:86px;height:1.5px;background:#e9eaec"></div>
<div class="a" style="left:915px;top:570.6px;width:12px;height:12px;border-radius:50%;background:#fff;border:1.5px solid #222"></div>
<div class="t" style="left:1043px;top:570.6px;font-size:11px;color:#5b6a7c">20</div>

<!-- edit grid / snap -->
<div class="a" style="left:990px;top:663px;width:90px;height:22px;border:1px solid #e3e6ea;border-radius:2px;background:#fff"></div>
<div class="t" style="left:1011px;top:666px;font-size:13px;color:#8e99a7">Edit Grid</div>
<div class="t" style="left:947px;top:697.5px;font-size:13px;color:#5b6a7c">Snap Grid</div>
<div class="a" style="left:1008px;top:695px;width:72px;height:22px;border:1px solid #e3e6ea;border-radius:2px;background:#fff"></div>
<div class="t" style="left:1016px;top:700px;font-size:13px;color:#8e99a7">1.0 mm</div>
<svg style="left:1064px;top:703px" width="7" height="4" viewBox="0 0 7 4"><path d="M3.5 0L6.5 4H.5Z" fill="#333"/></svg>

<!-- ===== RIGHT LIBRARY PANEL ===== -->
<div class="a" style="left:1090px;top:200px;width:276px;height:528px;background:#f0f0f3"></div>
<!-- workplane icon -->
<svg style="left:1140px;top:208px" width="45" height="45" viewBox="1140 208 45 45">
<path d="M1146.3 215.6L1178.5 213.5L1178 248.3L1147.5 245.8Z" fill="#e4f1f8"/>
<path d="M1151.7 215.2L1152.6 246.2M1157.0 214.9L1157.7 246.6M1162.4 214.6L1162.8 247.1M1167.8 214.2L1167.8 247.5M1173.1 213.8L1172.9 247.9M1146.5 219.9L1178.4 218.5M1146.6 224.2L1178.4 223.4M1146.8 228.5L1178.3 228.4M1147.0 232.9L1178.2 233.4M1147.2 237.2L1178.1 238.4M1147.3 241.5L1178.1 243.3" stroke="#3aa6d6" stroke-width=".6"/>
<path d="M1146.3 215.6L1178.5 213.5L1178 248.3L1147.5 245.8Z" fill="none" stroke="#1f98d0" stroke-width="1.8"/>
</svg>
<div class="t" style="left:1133px;top:256px;font-size:13px;color:#4f5f72">Workplane</div>
<!-- ruler icon -->
<svg style="left:1270px;top:208px" width="45" height="45" viewBox="1270 208 45 45">
<path d="M1276.9 215.7L1284.3 215.6L1282.4 238.2L1309.3 239.7L1309.9 248.2L1278.9 246.3Z" fill="#eef5fa" stroke="#1f98d0" stroke-width="1.8" stroke-linejoin="round"/>
<path d="M1280 221H1283M1279.6 226H1282.7M1279.2 231H1282.3M1288 240V243.5M1293 240.3V243.8M1298 240.6V244.1M1303 240.9V244.4" stroke="#1f98d0" stroke-width="1.1"/>
</svg>
<div class="t" style="left:1278px;top:256px;font-size:13px;color:#4f5f72">Ruler</div>
<div class="a" style="left:1090px;top:279px;width:276px;height:1px;background:#dfe2e7"></div>
<!-- dropdown -->
<div class="a" style="left:1096px;top:285px;width:265px;height:62px;background:#f7f8fa;border:1px solid #dde1e8;border-radius:3px"></div>
<div class="t" style="left:1106px;top:297px;font-size:11px;color:#4f5f72">Tinkercad</div>
<div class="t" style="left:1106px;top:317px;font-size:15px;color:#3a4a5e">Basic Shapes</div>
<svg style="left:1332px;top:315px" width="11" height="7" viewBox="0 0 11 7"><path d="M0 0H11L5.5 6.5Z" fill="#111"/></svg>
<div class="a" style="left:1095px;top:358px;width:266px;height:1px;background:#dfe2e7"></div>
<div class="a" style="left:1353px;top:360px;width:8px;height:73px;border-radius:4px;background:#c2c2c4"></div>
<!-- shapes -->
<svg style="left:1115px;top:375px" width="220" height="100" viewBox="1115 375 220 100">
<defs>
<pattern id="gsTop" width="7.5" height="7.5" patternUnits="userSpaceOnUse" patternTransform="rotate(-40)"><rect width="7.5" height="7.5" fill="#d6dbe4"/><rect width="3.6" height="7.5" fill="#b9bec8"/></pattern>
<pattern id="gsFront" width="7.5" height="7.5" patternUnits="userSpaceOnUse" patternTransform="rotate(-40)"><rect width="7.5" height="7.5" fill="#b4b9c2"/><rect width="3.6" height="7.5" fill="#9ca1aa"/></pattern>
<pattern id="gsRight" width="7.5" height="7.5" patternUnits="userSpaceOnUse" patternTransform="rotate(-40)"><rect width="7.5" height="7.5" fill="#d2d7e0"/><rect width="3.6" height="7.5" fill="#b3b8c2"/></pattern>
<linearGradient id="cylShade" x1="0" x2="1"><stop offset="0" stop-color="#000" stop-opacity=".22"/><stop offset=".55" stop-color="#000" stop-opacity=".02"/><stop offset="1" stop-color="#fff" stop-opacity=".1"/></linearGradient>
</defs>
<path d="M1127.9 408.8L1149.6 384.7L1200.4 391.9L1185.9 418.2Z" fill="url(#gsTop)"/>
<path d="M1127.9 408.8L1185.9 418.2L1184.3 467.1L1131.1 455.5Z" fill="url(#gsFront)"/>
<path d="M1185.9 418.2L1200.4 391.9L1197.9 437.0L1184.3 467.1Z" fill="url(#gsRight)"/>
<path d="M1127.9 408.8L1185.9 418.2L1200.4 391.9M1185.9 418.2L1184.3 467.1" fill="none" stroke="#8a8f98" stroke-width=".7"/>
<path d="M1127.9 408.8L1149.6 384.7L1200.4 391.9L1197.9 437.0L1184.3 467.1L1131.1 455.5Z" fill="none" stroke="#6b7078" stroke-width="1.3" stroke-linejoin="round"/>
<path d="M1261.8 401V449A29.2 13.8 0 0 0 1320.2 449V401Z" fill="url(#gsRight)"/>
<path d="M1261.8 401V449A29.2 13.8 0 0 0 1320.2 449V401Z" fill="url(#cylShade)"/>
<ellipse cx="1291" cy="400.8" rx="29.2" ry="13.7" fill="url(#gsTop)"/>
<path d="M1261.8 401V449A29.2 13.8 0 0 0 1320.2 449V401A29.2 13.7 0 0 0 1261.8 401" fill="none" stroke="#6b7078" stroke-width="1.3"/>
<path d="M1261.8 401A29.2 13.7 0 0 0 1320.2 401" fill="none" stroke="#8a8f98" stroke-width=".7"/>
</svg>
<div class="t" style="left:1154px;top:475px;font-size:13px;color:#56657a">Box</div>
<div class="t" style="left:1265px;top:475px;font-size:13px;color:#56657a">Cylinder</div>
<svg style="left:1115px;top:525px" width="220" height="100" viewBox="1115 525 220 100">
<defs><linearGradient id="og2" x1="0" x2="1"><stop offset="0" stop-color="#8f4c10"/><stop offset=".35" stop-color="#b9621a"/><stop offset="1" stop-color="#e07c22"/></linearGradient></defs>
<path d="M1127.9 560.8L1149.6 536.3L1200.4 543.5L1185.9 570.1Z" fill="#c91828"/>
<path d="M1127.9 560.8L1185.9 570.1L1184.3 619.2L1131.1 607.9Z" fill="#a8131f"/>
<path d="M1185.9 570.1L1200.4 543.5L1197.9 587.8L1184.3 619.2Z" fill="#b71522"/>
<path d="M1127.9 560.8L1185.9 570.1L1200.4 543.5M1185.9 570.1L1184.3 619.2" fill="none" stroke="#8e101a" stroke-width=".6"/>
<path d="M1127.9 560.8L1149.6 536.3L1200.4 543.5L1197.9 587.8L1184.3 619.2L1131.1 607.9Z" fill="none" stroke="#850e17" stroke-width="1.2" stroke-linejoin="round"/>
<path d="M1261.9 552.6V600.7A29.0 13.4 0 0 0 1319.9 600.7V552.6Z" fill="url(#og2)" stroke="#87460c" stroke-width="1.1"/>
<ellipse cx="1290.9" cy="552.6" rx="29.0" ry="13.4" fill="#d3711c" stroke="#87460c" stroke-width="1.1"/>
</svg>
<div class="t" style="left:1154px;top:627px;font-size:13px;color:#56657a">Box</div>
<div class="t" style="left:1265px;top:627px;font-size:13px;color:#56657a">Cylinder</div>
<div class="a" style="left:1138.5px;top:701px;width:55px;height:55px;border-radius:50%;background:radial-gradient(circle at 65% 45%,#10a0e0,#0f86c4 60%,#0c6ea6 100%)"></div>
<svg style="left:1255px;top:700px" width="70" height="30" viewBox="1255 700 70 30"><path d="M1263 730C1264 722 1268 718 1272 718C1276 718 1278 722 1281 726L1284 729L1287 718C1289 713 1292 711 1295 711C1298 711 1300 714 1301 719L1302 730Z" fill="#9fc6e6" stroke="#8ab0d0" stroke-width=".8"/><path d="M1288 729L1292 718C1294 715 1297 715 1298 719L1299 729Z" fill="#86aed0"/><rect x="1309" y="712" width="6.5" height="20" rx="3.2" fill="#9fc6e6"/><rect x="1311.5" y="713" width="2" height="18" fill="#86aed0"/></svg>

<!-- collapse tab -->
<div class="a" style="left:1080px;top:441px;width:16px;height:47px;background:#f5f6f8;border:1px solid #dfe3e9;border-right:none;border-radius:2px 0 0 2px"></div>
<svg style="left:1084px;top:452px" width="10" height="24" viewBox="0 0 10 24"><path d="M2.4 1.2L8.6 12.1L2.4 22.6" fill="none" stroke="#111" stroke-width="2.2"/></svg>
<!-- ===== TASKBAR ===== -->

<div class="a" style="left:0;top:728px;width:1366px;height:40px;background:linear-gradient(90deg,#21363f 0%,#20303f 50%,#1c2a3d 100%)"></div>
<svg style="left:16px;top:740px" width="17" height="17" viewBox="0 0 17 17"><path d="M0 2.4L7 1.4V8H0Z M8 1.2L17 0V8H8Z M0 9H7V15.6L0 14.6Z M8 9H17V17L8 15.8Z" fill="#fff"/></svg>
<div class="a" style="left:48px;top:728px;width:344px;height:40px;background:#f1f1f1;border-top:1px solid #c9c9c9"></div>
<svg style="left:60px;top:740px" width="17" height="17" viewBox="0 0 17 17"><circle cx="10.5" cy="6.5" r="5.2" fill="none" stroke="#111" stroke-width="1.3"/><path d="M6.8 10.2L1 16" stroke="#111" stroke-width="1.4"/></svg>
<div class="t" style="left:88px;top:741px;font-size:14.6px;color:#1b1b1b">Type here to search</div>
<div class="a" style="left:408.5px;top:741px;width:15px;height:15px;border-radius:50%;border:2px solid #fff"></div>
<svg style="left:456px;top:739px" width="16" height="16" viewBox="0 0 16 16"><path d="M1 1H10M1 15H10M2.5 4H9.5V12H2.5Z" fill="none" stroke="#fff" stroke-width="1.2"/><path d="M13.5 2V6M13.5 8.5V15" stroke="#fff" stroke-width="1.6"/></svg>
<svg style="left:504px;top:738px" width="22" height="20" viewBox="0 0 22 20"><path d="M0 2H8L10 4H22V19H0Z" fill="#f5c23e"/><path d="M0 6H22V19H0Z" fill="#ffd75e"/><path d="M6 13H16V19H14V15H8V19H6Z" fill="#3b8fd6"/></svg>
<svg style="left:552px;top:736px" width="24" height="23" viewBox="0 0 24 23"><path d="M8 6V4A4 4 0 0 1 16 4V6" fill="none" stroke="#fff" stroke-width="1.5"/><rect x="0" y="6" width="24" height="17" rx="1" fill="#fff"/><rect x="7" y="9" width="4.5" height="4.5" fill="#f25022"/><rect x="12.5" y="9" width="4.5" height="4.5" fill="#7fba00"/><rect x="7" y="14.5" width="4.5" height="4.5" fill="#00a4ef"/><rect x="12.5" y="14.5" width="4.5" height="4.5" fill="#ffb900"/></svg>
<div class="a" style="left:589px;top:728px;width:48px;height:40px;background:#3a4c58"></div>
<div class="a" style="left:589px;top:766px;width:48px;height:2px;background:#76b9ed"></div>
<div class="a" style="left:602px;top:737px;width:24px;height:24px;border-radius:50%;background:conic-gradient(from -60deg,#db4437 0 120deg,#f4c20d 120deg 240deg,#0f9d58 240deg 360deg)"></div>
<div class="a" style="left:609px;top:744px;width:10px;height:10px;border-radius:50%;background:#4285f4;border:2px solid #fff"></div>
<div class="a" style="left:612px;top:747px;width:15px;height:15px;border-radius:50%;background:radial-gradient(circle at 45% 50%,#2b1d14 35%,#8d6b3c 65%,#c8a868)"></div>
<svg style="left:650px;top:738px" width="24" height="22" viewBox="0 0 24 22"><rect x="8" y="1.5" width="15" height="19" fill="#fff"/><path d="M11 5H21M11 8H21M11 11H21M11 14H21M11 17H21" stroke="#41a5ee" stroke-width="1"/><path d="M0 3L13 0V22L0 19Z" fill="#2b579a"/><text x="6.5" y="15" font-family="Liberation Sans" font-weight="bold" font-size="9" fill="#fff" text-anchor="middle">W</text></svg>
<svg style="left:699px;top:738px" width="24" height="22" viewBox="0 0 24 22"><path d="M0 6L12 0L24 6V22H0Z" fill="#0a64c8"/><path d="M0 6L12 14L24 6V22H0Z" fill="#28a8ea"/><path d="M0 22L12 12L24 22Z" fill="#50d9ff" fill-opacity=".6"/></svg>
<svg style="left:748px;top:737px" width="24" height="23" viewBox="0 0 24 23"><rect x="8" y="2" width="15" height="19" fill="#fff"/><path d="M11 5H21M11 9H21M11 13H21M11 17H21M15 3V20" stroke="#21a366" stroke-width="1"/><path d="M0 3L13 0V23L0 20Z" fill="#1d6f42"/><text x="6.5" y="15.5" font-family="Liberation Sans" font-weight="bold" font-size="9" fill="#fff" text-anchor="middle">X</text></svg>
<svg style="left:797px;top:737px" width="25" height="24" viewBox="0 0 25 24"><ellipse cx="12" cy="10" rx="11" ry="8" fill="#d9d9d9" stroke="#d43c3c" stroke-width="1.3" transform="rotate(-20 12 10)"/><circle cx="14" cy="19" r="3" fill="none" stroke="#2a8ad6" stroke-width="1.6"/><circle cx="21" cy="19" r="3" fill="none" stroke="#2a8ad6" stroke-width="1.6"/><path d="M8 3L16 17M18 3L17 17" stroke="#555" stroke-width="1.2"/></svg>
<svg style="left:845px;top:737px" width="25" height="23" viewBox="0 0 25 23"><circle cx="20" cy="5" r="3" fill="#7b83eb"/><rect x="14" y="9" width="10" height="11" rx="4" fill="#7b83eb"/><circle cx="13" cy="4" r="3.8" fill="#5059c9"/><rect x="7" y="8.5" width="13" height="14" rx="5" fill="#5059c9"/><rect x="0" y="6" width="13" height="13" rx="1" fill="#4b53bc"/><text x="6.5" y="16" font-family="Liberation Sans" font-weight="bold" font-size="10" fill="#fff" text-anchor="middle">T</text></svg>
<svg style="left:896px;top:737px" width="22" height="23" viewBox="0 0 22 23"><path d="M5.5 13H21.5C22.5 5 17 0 11 0C4.5 0 0 5 0 11.5C0 18.5 6 23 12 23C15.5 23 18.5 22 20.5 20.5V15.5C18.5 17.5 15.5 18.5 13 18.5C8.5 18.5 5.5 16.5 5.5 13Z M5.8 9C6.5 5.5 9 4 11.5 4C14.5 4 16.5 6 16.5 9Z" fill="#0f7bd6" fill-rule="evenodd"/></svg>
<!-- tray -->
<svg style="left:1135px;top:745px" width="12" height="7" viewBox="0 0 12 7"><path d="M.5 6.5L6 1L11.5 6.5" fill="none" stroke="#fff" stroke-width="1.2"/></svg>
<svg style="left:1157px;top:743px" width="17" height="11" viewBox="0 0 17 11"><path d="M3 11A3 3 0 0 1 2.5 5A4.5 4.5 0 0 1 10.5 3A3.5 3.5 0 0 1 14 7A2 2 0 0 1 14 11Z" fill="#ddd"/></svg>
<svg style="left:1182px;top:742px" width="16" height="10" viewBox="0 0 16 10"><rect x=".5" y=".5" width="13" height="9" fill="none" stroke="#fff" stroke-width="1.1"/><rect x="2.5" y="2.5" width="7" height="5" fill="#fff"/><rect x="14" y="3" width="2" height="4" fill="#fff"/></svg>
<svg style="left:1205px;top:740px" width="13" height="14" viewBox="0 0 13 14"><path d="M.5 4.5H3L7 1V13L3 9.5H.5Z" fill="none" stroke="#fff" stroke-width="1"/><path d="M9 5L12.5 8.5M12.5 5L9 8.5" stroke="#fff" stroke-width="1"/></svg>
<svg style="left:1231px;top:743px" width="14" height="13" viewBox="0 0 14 13"><path d="M1 6A10 10 0 0 1 13 1.5M3.5 8.5A6.5 6.5 0 0 1 12 5M6 11A3 3 0 0 1 11 8.5" fill="none" stroke="#fff" stroke-width="1.1"/><circle cx="11" cy="11" r="1.5" fill="#fff"/></svg>
<div class="t" style="left:1260px;top:733px;font-size:12px;color:#fff">2:45 PM</div>
<div class="t" style="left:1254px;top:750px;font-size:12px;color:#fff">8/17/2020</div>
<svg style="left:1324px;top:739px" width="18" height="18" viewBox="0 0 18 18"><path d="M.5 .5H16.5V12.5H7L3.5 16V12.5H.5Z" fill="#fff"/><path d="M3 4H14M3 6.5H14M3 9H11" stroke="#333" stroke-width="1"/></svg>
<div class="a" style="left:1331px;top:746px;width:18px;height:18px;border-radius:50%;background:#2b2b2b;border:1.5px solid #9a9a9a;color:#fff;font-size:12px;text-align:center;line-height:15px">2</div>
<div class="a" style="left:1363px;top:728px;width:1px;height:40px;background:#5a6470"></div>

</body></html>
